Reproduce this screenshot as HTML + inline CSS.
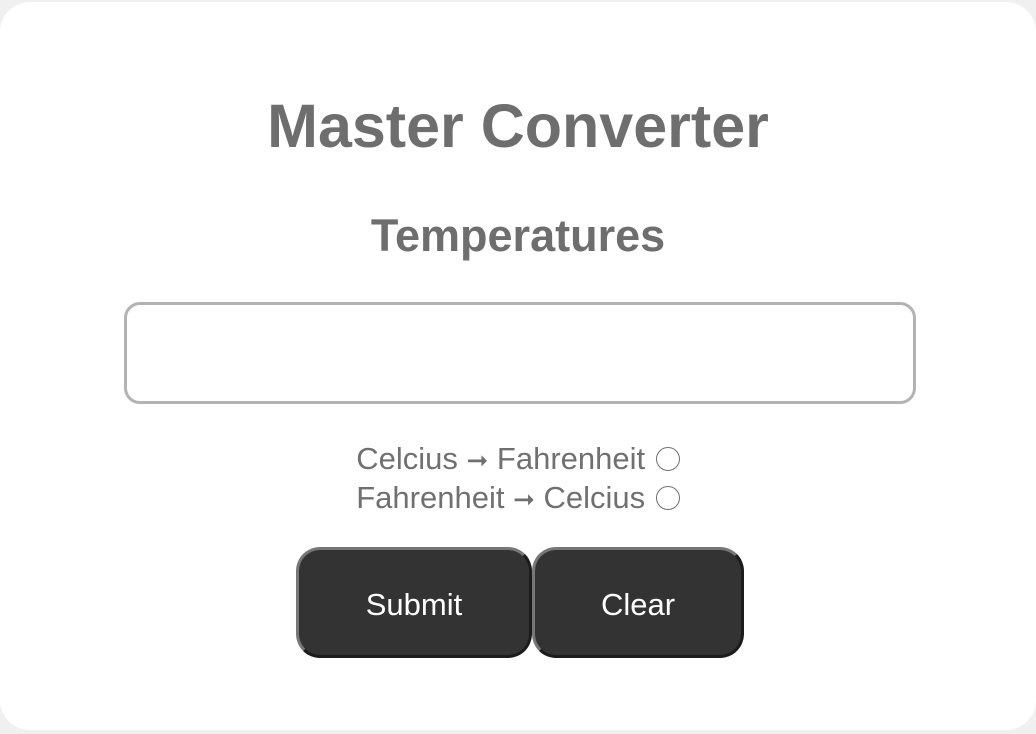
<!DOCTYPE html>
<html><head><style>
body{margin:0;background:#f0f0f0;width:1036px;height:734px;overflow:hidden;font-family:"Liberation Sans",sans-serif;}
.card{position:absolute;left:0;top:2px;width:1036px;height:728px;background:#fff;border-radius:30px;}
h1{position:absolute;left:0;width:1036px;top:91px;margin:0;text-align:center;font-size:61px;font-weight:bold;color:#6e6e6e;letter-spacing:0;line-height:70px;}
h2{position:absolute;left:0;width:1036px;top:209px;margin:0;text-align:center;font-size:45px;font-weight:bold;color:#6e6e6e;letter-spacing:0;line-height:54px;}
.inp{position:absolute;left:124px;top:302px;width:786px;height:96px;border:3px solid #b3b3b3;border-radius:16px;}
.lab{position:absolute;left:0;width:1036px;text-align:center;font-size:31px;color:#707070;line-height:38px;}
.a{font-size:26px;}
.r{display:inline-block;width:24px;height:24px;border:1.5px solid #707070;border-radius:50%;vertical-align:-2px;margin-left:2px;box-sizing:border-box;}
.btn{position:absolute;top:547px;height:111px;box-sizing:border-box;background:#333;border:3px solid;border-color:#777 #1c1c1c #1c1c1c #777;border-radius:24px;color:#fff;font-size:31px;text-align:center;line-height:109px;}
</style></head><body>
<div class="card"></div>
<h1>Master Converter</h1>
<h2>Temperatures</h2>
<div class="inp"></div>
<div class="lab" style="top:440px">Celcius <span class="a">➞</span> Fahrenheit <span class="r"></span></div>
<div class="lab" style="top:479px">Fahrenheit <span class="a">➞</span> Celcius <span class="r"></span></div>
<div class="btn" style="left:296px;width:236px">Submit</div>
<div class="btn" style="left:532px;width:212px">Clear</div>
</body></html>
